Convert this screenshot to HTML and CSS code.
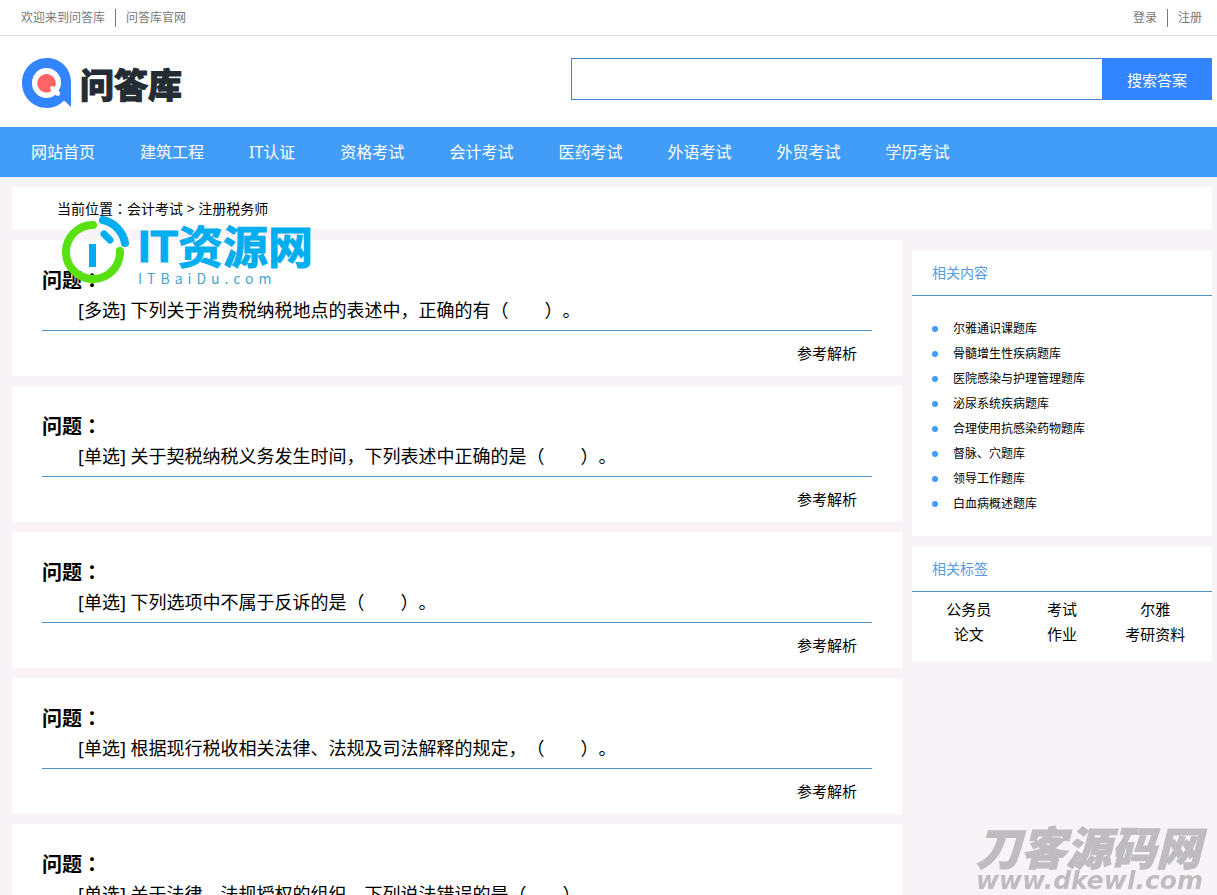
FILE: index.html
```html
<!DOCTYPE html>
<html lang="zh-CN">
<head>
<meta charset="utf-8">
<title>注册税务师 - 问答库</title>
<link rel="stylesheet" href="styles.css">
</head>
<body>
<div class="topbar">
  <div class="topbar-links"><a href="#">欢迎来到问答库</a><a href="#">问答库官网</a></div>
  <div class="topbar-links"><a href="#">登录</a><a href="#">注册</a></div>
</div>
<header class="header">
  <a class="logo" href="#" aria-label="问答库">
    <svg class="logo-mark" width="50" height="52" viewBox="0 0 50 52" aria-hidden="true">
      <path fill="#3385ff" d="M25 1C38 1 49 11 49 25V50L42 43.500C38 48 32 51 25 51C11 51 0 40 0 26S11 1 25 1Z"/>
      <path fill="#fff" d="M24.500 11A14.500 14.500 0 0 1 39 25.500C39 28.500 38.300 31 36.700 33.300L38 35.500Q39 38 36 39L33 38Q29.500 41 24.500 41A14.800 14.800 0 0 1 10 26A14.500 14.500 0 0 1 24.500 11Z"/>
      <path fill="#ff6363" d="M24.500 17A9.300 9.300 0 0 1 33 30L30.500 29Q27.500 29 28.500 32L29 34.500A9.300 9.300 0 1 1 24.500 17Z"/>
    </svg>
    <span class="logo-text">问答库</span>
  </a>
  <form class="search">
    <input class="search-input" type="text" aria-label="搜索">
    <button class="search-button" type="button">搜索答案</button>
  </form>
</header>
<nav class="nav">
  <a href="#">网站首页</a><a href="#">建筑工程</a><a href="#">IT认证</a><a href="#">资格考试</a><a href="#">会计考试</a><a href="#">医药考试</a><a href="#">外语考试</a><a href="#">外贸考试</a><a href="#">学历考试</a>
</nav>
<div class="page">
  <div class="breadcrumb">当前位置<span class="mid" lang="zh-TW">：</span><a href="#">会计考试</a> &gt; <a href="#">注册税务师</a></div>
  <div class="columns">
    <main class="questions">
      <article class="question">
        <h2>问题<span class="mid" lang="zh-TW">：</span></h2>
        <p>[多选] 下列关于消费税纳税地点的表述中，正确的有（　　）。</p>
        <a class="answer" href="#">参考解析</a>
      </article>
      <article class="question">
        <h2>问题<span class="mid" lang="zh-TW">：</span></h2>
        <p>[单选] 关于契税纳税义务发生时间，下列表述中正确的是（　　）。</p>
        <a class="answer" href="#">参考解析</a>
      </article>
      <article class="question">
        <h2>问题<span class="mid" lang="zh-TW">：</span></h2>
        <p>[单选] 下列选项中不属于反诉的是（　　）。</p>
        <a class="answer" href="#">参考解析</a>
      </article>
      <article class="question">
        <h2>问题<span class="mid" lang="zh-TW">：</span></h2>
        <p>[单选] 根据现行税收相关法律、法规及司法解释的规定，（　　）。</p>
        <a class="answer" href="#">参考解析</a>
      </article>
      <article class="question">
        <h2>问题<span class="mid" lang="zh-TW">：</span></h2>
        <p>[单选] 关于法律、法规授权的组织，下列说法错误的是（　　）。</p>
        <a class="answer" href="#">参考解析</a>
      </article>
    </main>
    <aside class="sidebar">
      <section class="panel">
        <h3>相关内容</h3>
        <ul class="related">
          <li><a href="#">尔雅通识课题库</a></li>
          <li><a href="#">骨髓增生性疾病题库</a></li>
          <li><a href="#">医院感染与护理管理题库</a></li>
          <li><a href="#">泌尿系统疾病题库</a></li>
          <li><a href="#">合理使用抗感染药物题库</a></li>
          <li><a href="#">督脉、穴题库</a></li>
          <li><a href="#">领导工作题库</a></li>
          <li><a href="#">白血病概述题库</a></li>
        </ul>
      </section>
      <section class="panel">
        <h3>相关标签</h3>
        <div class="tags">
          <a href="#">公务员</a><a href="#">考试</a><a href="#">尔雅</a>
          <a href="#">论文</a><a href="#">作业</a><a href="#">考研资料</a>
        </div>
      </section>
    </aside>
  </div>
</div>
<div class="stamp">
  <svg width="68" height="68" viewBox="0 0 68 68" fill="none" stroke-linecap="round" aria-hidden="true">
    <path stroke="#58e010" stroke-width="8" d="M31 9A27 27 0 1 0 58 35"/>
    <path stroke="#00adef" stroke-width="8" d="M41 4A29 29 0 0 1 63 27"/>
    <path stroke="#00adef" stroke-width="7" d="M42 18L48 24"/>
    <path stroke="#00adef" stroke-width="7" stroke-linecap="butt" d="M30.500 28V51"/>
  </svg>
  <div class="stamp-words">
    <div class="stamp-name"><span>IT</span>资源网</div>
    <div class="stamp-site">ITBaiDu.com</div>
  </div>
</div>
<div class="watermark">
  <div class="watermark-name">刀客源码网</div>
  <div class="watermark-site">www.dkewl.com</div>
</div>
</body>
</html>
```
FILE: styles.css
```css
* { box-sizing: border-box; }
body {
  margin: 0;
  background: #f7f3f7;
  color: #000;
  font-family: "Noto Sans", "Noto Sans CJK SC", sans-serif;
  font-size: 14px;
  text-spacing-trim: space-all;
}
a { color: inherit; text-decoration: none; }
h2, h3, p, ul { margin: 0; padding: 0; }
/* punctuation centred in its cell */
.mid { font-family: "Noto Sans CJK TC", sans-serif; line-height: 1; }

.topbar {
  display: flex;
  justify-content: space-between;
  align-items: center;
  height: 36px;
  padding: 0 5px 0 11px;
  background: #fff;
  border-bottom: 1px solid #ddd;
  color: #777;
  font-size: 12px;
  line-height: 18px;
}
.topbar-links { display: flex; }
.topbar-links a { padding: 0 10px; }
.topbar-links a + a { border-left: 1px solid #777; }

.header {
  display: flex;
  justify-content: space-between;
  align-items: flex-start;
  height: 91px;
  padding: 21px 5px 0 22px;
  background: #fff;
}
.logo { display: flex; align-items: flex-start; gap: 8px; }
.logo-text {
  color: #232b33;
  font-size: 34px;
  font-weight: 900;
  line-height: 56px;
  -webkit-text-stroke: 1px #232b33;
}
.search { display: flex; flex: 0 0 641px; height: 42px; margin-top: 1px; }
.search-input {
  flex: 1;
  min-width: 0;
  padding: 0 10px;
  border: 1px solid #4080d0;
  border-right: 0;
  background: #fff;
  font: inherit;
}
.search-button {
  width: 110px;
  border: 0;
  background: #3385ff;
  color: #fff;
  font-family: inherit;
  font-size: 15px;
}

.nav {
  display: flex;
  gap: 45px;
  height: 50px;
  padding: 0 31px;
  background: #429df8;
  color: #fff;
  font-size: 16px;
  line-height: 50px;
}

.page { padding: 10px 5px 10px 12px; }
.breadcrumb {
  height: 43px;
  padding-left: 45px;
  background: #fff;
  line-height: 43px;
}
.columns { display: flex; gap: 10px; padding-top: 10px; }
.questions { display: flex; flex: 1; flex-direction: column; gap: 10px; }
.question {
  display: flex;
  flex-direction: column;
  padding: 26px 30px 8px;
  background: #fff;
}
.question h2 { font-size: 20px; line-height: 30px; }
.question p {
  padding-bottom: 6px;
  border-bottom: 1px solid #5090c8;
  font-size: 18px;
  line-height: 28px;
  text-indent: 2em;
}
.answer {
  align-self: flex-end;
  margin-right: 15px;
  padding-top: 7px;
  font-size: 15px;
  line-height: 30px;
}

.sidebar { display: flex; flex: 0 0 300px; flex-direction: column; gap: 10px; padding-top: 10px; }
.panel { background: #fff; }
.panel h3 {
  padding-left: 20px;
  border-bottom: 1px solid #5090c8;
  color: #5499e4;
  font-size: 14px;
  font-weight: 400;
  line-height: 45px;
}
.related {
  padding: 20px;
  font-size: 12px;
  line-height: 25px;
  list-style: none;
}
.related li { display: flex; align-items: center; gap: 15px; }
.related li::before {
  width: 6px;
  height: 6px;
  border-radius: 50%;
  background: #429df8;
  content: "";
}
.tags {
  display: grid;
  grid-template-columns: repeat(3, 1fr);
  padding: 5px 10px 15px;
  font-size: 15px;
  line-height: 25px;
  text-align: center;
}

.stamp { position: absolute; top: 216px; left: 62px; display: flex; gap: 8px; }
.stamp-words { padding-top: 8px; color: #00adef; }
.stamp-name {
  display: flex;
  font-size: 45px;
  font-weight: 700;
  line-height: 46px;
  -webkit-text-stroke: 1px #00adef;
}
.stamp-name span { font-family: "Liberation Sans", sans-serif; }
.stamp-site {
  color: #45a5cf;
  font-family: "Noto Sans CJK SC", sans-serif;
  font-size: 14px;
  letter-spacing: 5px;
  line-height: 16px;
}
.watermark {
  position: fixed;
  right: 14px;
  bottom: 2px;
  color: #bfbcc1;
  font-style: italic;
  font-weight: 900;
}
.watermark-name { font-size: 45px; line-height: 42px; -webkit-text-stroke: 1px #bfbcc1; }
.watermark-site {
  font-family: "DejaVu Sans", sans-serif;
  font-size: 25px;
  font-weight: 700;
  line-height: 24px;
}
```
